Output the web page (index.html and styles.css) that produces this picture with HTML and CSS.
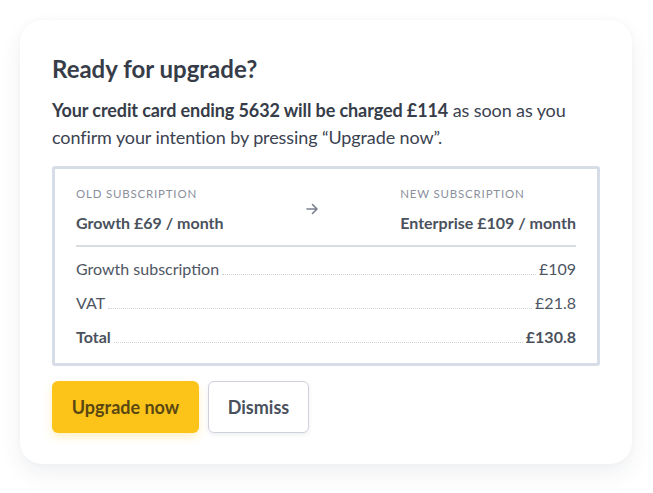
FILE: index.html
```html
<!DOCTYPE html>
<html>
<head>
<meta charset="utf-8">
<link rel="stylesheet" href="styles.css">
</head>
<body>
<div class="card">
  <h1 class="title">Ready for upgrade?</h1>
  <p class="lead"><strong>Your credit card ending 5632 will be charged £114</strong> as soon as you confirm your intention by pressing “Upgrade now”.</p>
  <div class="summary">
    <div class="plans">
      <div class="plan">
        <div class="label">Old subscription</div>
        <div class="value">Growth £69 / month</div>
      </div>
      <div class="arrow">
        <svg width="14" height="14" viewBox="0 0 14 14" fill="none" stroke="#7b8090" stroke-width="1.6" stroke-linecap="round" stroke-linejoin="round"><path d="M2 7h10M7.5 2.5L12 7l-4.5 4.5"/></svg>
      </div>
      <div class="plan">
        <div class="label">New subscription</div>
        <div class="value">Enterprise £109 / month</div>
      </div>
    </div>
    <div class="rows">
      <div class="row"><span>Growth subscription</span><span class="dots"></span><span>£109</span></div>
      <div class="row"><span>VAT</span><span class="dots"></span><span>£21.8</span></div>
      <div class="row total"><span>Total</span><span class="dots"></span><span>£130.8</span></div>
    </div>
  </div>
  <div class="actions">
    <button class="btn btn-primary">Upgrade now</button>
    <button class="btn btn-secondary">Dismiss</button>
  </div>
</div>
</body>
</html>
```
FILE: styles.css
```css
* { box-sizing: border-box; }
html, body { margin: 0; background: #ffffff; }
body {
  padding: 20px 21px 25px 20px;
  font-family: Lato, "Open Sans", sans-serif;
  color: #3b4250;
}
.card {
  width: 612px;
  background: #fff;
  border-radius: 22px;
  padding: 33px 32px 31px 32px;
  box-shadow: 0 10px 22px rgba(40, 50, 90, 0.07), 0 0 6px rgba(40, 50, 90, 0.03);
}
.title {
  margin: 0;
  font-size: 24px;
  line-height: 32px;
  font-weight: 700;
  color: #363c48;
}
.lead {
  margin: 12px 0 0 0;
  font-size: 18px;
  line-height: 27px;
  letter-spacing: -0.1px;
  color: #3b4250;
}
.lead strong { font-weight: 700; color: #363c48; }
.summary {
  margin-top: 15px;
  border: 3px solid #d6dde7;
  border-radius: 3px;
  padding: 17px 21px 16px 21px;
}
.plans {
  display: flex;
  align-items: center;
  justify-content: space-between;
  padding-bottom: 12px;
  border-bottom: 2px solid #d9dce1;
}
.label {
  font-size: 11.5px;
  letter-spacing: 0.8px;
  text-transform: uppercase;
  color: #8b909c;
  line-height: 16px;
}
.value {
  margin-top: 11px;
  font-size: 16px;
  font-weight: 700;
  color: #4a515d;
  line-height: 20px;
}
.arrow { display: flex; margin-bottom: 2px; }
.rows { padding-top: 12px; }
.row {
  display: flex;
  align-items: baseline;
  font-size: 16px;
  line-height: 20px;
  color: #4f5663;
  margin-bottom: 14px;
}
.row:last-child { margin-bottom: 0; }
.row.total { font-weight: 700; color: #4a515d; }
.dots {
  flex: 1;
  border-bottom: 1px dotted #cdd1d8;
  margin: 0 3px;
}
.actions {
  display: flex;
  gap: 9px;
  margin-top: 15px;
}
.btn {
  font-family: Lato, "Open Sans", sans-serif;
  font-size: 18px;
  font-weight: 700;
  height: 52px;
  border-radius: 6px;
  padding: 0;
  cursor: pointer;
}
.btn-primary {
  background: #fcc419;
  border: none;
  color: #5a4712;
  width: 147px;
  box-shadow: 0 4px 8px rgba(252, 196, 25, 0.25);
}
.btn-secondary {
  background: #fff;
  border: 1px solid #cfd2dc;
  color: #4a515d;
  width: 101px;
  box-shadow: 0 2px 4px rgba(40, 50, 90, 0.08);
}
```
